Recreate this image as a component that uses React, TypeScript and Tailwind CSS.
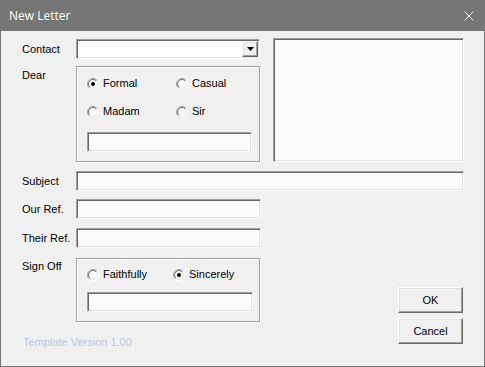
import { useId } from "react"

const sunken =
  "border border-t-[#a0a0a0] border-l-[#a0a0a0] border-b-white border-r-white shadow-[inset_1px_1px_0_#696969,inset_-1px_-1px_0_#e3e3e3] bg-[#fbfbfb]"
const etched = "border border-[#a0a0a0] shadow-[inset_1px_1px_0_#fff,1px_1px_0_#fff]"
const raised =
  "border border-t-white border-l-white border-b-[#696969] border-r-[#696969] shadow-[inset_-1px_-1px_0_#a0a0a0,inset_1px_1px_0_#e3e3e3] bg-[#f0f0f0]"

function Radio({ label, checked, width }: { label: string; checked?: boolean; width?: string }) {
  const id = useId()
  return (
    <div className={`flex items-center gap-[4px] h-[13px] ${width ?? ""}`}>
      <svg width="12" height="12" viewBox="0 0 12 12" className="shrink-0">
        <defs>
          <linearGradient id={`o${id}`} x1="0" y1="0" x2="1" y2="1">
            <stop offset="0.45" stopColor="#a0a0a0" />
            <stop offset="0.55" stopColor="#ffffff" />
          </linearGradient>
          <linearGradient id={`i${id}`} x1="0" y1="0" x2="1" y2="1">
            <stop offset="0.45" stopColor="#696969" />
            <stop offset="0.55" stopColor="#e3e3e3" />
          </linearGradient>
        </defs>
        <circle cx="6" cy="6" r="5.5" fill="none" stroke={`url(#o${id})`} />
        <circle cx="6" cy="6" r="4.5" fill="#fff" stroke={`url(#i${id})`} />
        {checked && <circle cx="6" cy="6" r="2" fill="#000" />}
      </svg>
      <span>{label}</span>
    </div>
  )
}

export default function App() {
  return (
    <div className="w-[485px] h-[367px] flex flex-col bg-[#767676] font-['Liberation_Sans',Arial,sans-serif]">
      {/* Title bar */}
      <div className="h-[31px] shrink-0 flex items-center justify-between pl-[9px] pr-[11px] text-white text-[12px] font-['Open_Sans',sans-serif]">
        <span>New Letter</span>
        <svg width="10" height="10" viewBox="0 0 10 10">
          <path d="M0.5 0.5 L9.5 9.5 M9.5 0.5 L0.5 9.5" stroke="#fff" strokeWidth="1" />
        </svg>
      </div>

      {/* Body */}
      <div className="flex-1 mx-px mb-px bg-[#f0f0f0] pl-[21px] pr-[20px] pt-[7px] text-[11px] leading-[13px] text-black">
        <div className="flex h-[124px]">
          <div className="w-[238px] flex flex-col">
            <div className="mt-[1px] h-[20px] flex items-center">
              <span className="w-[54px]">Contact</span>
              <div className={`w-[184px] h-full flex justify-end items-center pr-[1px] ${sunken} bg-white`}>
                <div className={`w-[16px] h-[16px] flex items-center justify-center ${raised}`}>
                  <svg width="7" height="4" viewBox="0 0 7 4">
                    <path d="M0 0 H7 L3.5 4 Z" fill="#000" />
                  </svg>
                </div>
              </div>
            </div>
            <div className="mt-[7px] flex">
              <span className="w-[54px] pt-[3px]">Dear</span>
              <div className={`w-[184px] h-[96px] ${etched} pl-[10px] flex flex-col`}>
                <div className="mt-[10px] flex">
                  <Radio label="Formal" checked width="w-[89px]" />
                  <Radio label="Casual" />
                </div>
                <div className="mt-[15px] flex">
                  <Radio label="Madam" width="w-[89px]" />
                  <Radio label="Sir" />
                </div>
                <div className={`mt-[14px] w-[165px] h-[20px] ${sunken}`} />
              </div>
            </div>
          </div>
          <div className={`ml-[13px] w-[191px] h-[124px] ${sunken}`} />
        </div>

        <div className="mt-[9px] h-[20px] flex items-center">
          <span className="w-[54px]">Subject</span>
          <div className={`flex-1 h-full ${sunken}`} />
        </div>
        <div className="mt-[8px] h-[20px] flex items-center">
          <span className="w-[54px]">Our Ref.</span>
          <div className={`w-[185px] h-full ${sunken}`} />
        </div>
        <div className="mt-[9px] h-[20px] flex items-center">
          <span className="w-[54px]">Their Ref.</span>
          <div className={`w-[185px] h-full ${sunken}`} />
        </div>

        <div className="mt-[10px] flex">
          <div className="w-[238px] flex flex-col">
            <div className="flex">
              <span className="w-[54px] pt-[2px]">Sign Off</span>
              <div className={`w-[184px] h-[64px] ${etched} pl-[10px] flex flex-col`}>
                <div className="mt-[9px] flex">
                  <Radio label="Faithfully" width="w-[86px]" />
                  <Radio label="Sincerely" checked />
                </div>
                <div className={`mt-[11px] w-[166px] h-[20px] ${sunken}`} />
              </div>
            </div>
            <span className="mt-[14px] pl-[1px] text-[#b9c6dd]">Template Version 1.00</span>
          </div>
          <div className="ml-auto mr-[1px] pt-[29px] flex flex-col gap-[5px]">
            <button className={`w-[65px] h-[26px] ${raised}`}>OK</button>
            <button className={`w-[65px] h-[26px] ${raised}`}>Cancel</button>
          </div>
        </div>
      </div>
    </div>
  )
}
